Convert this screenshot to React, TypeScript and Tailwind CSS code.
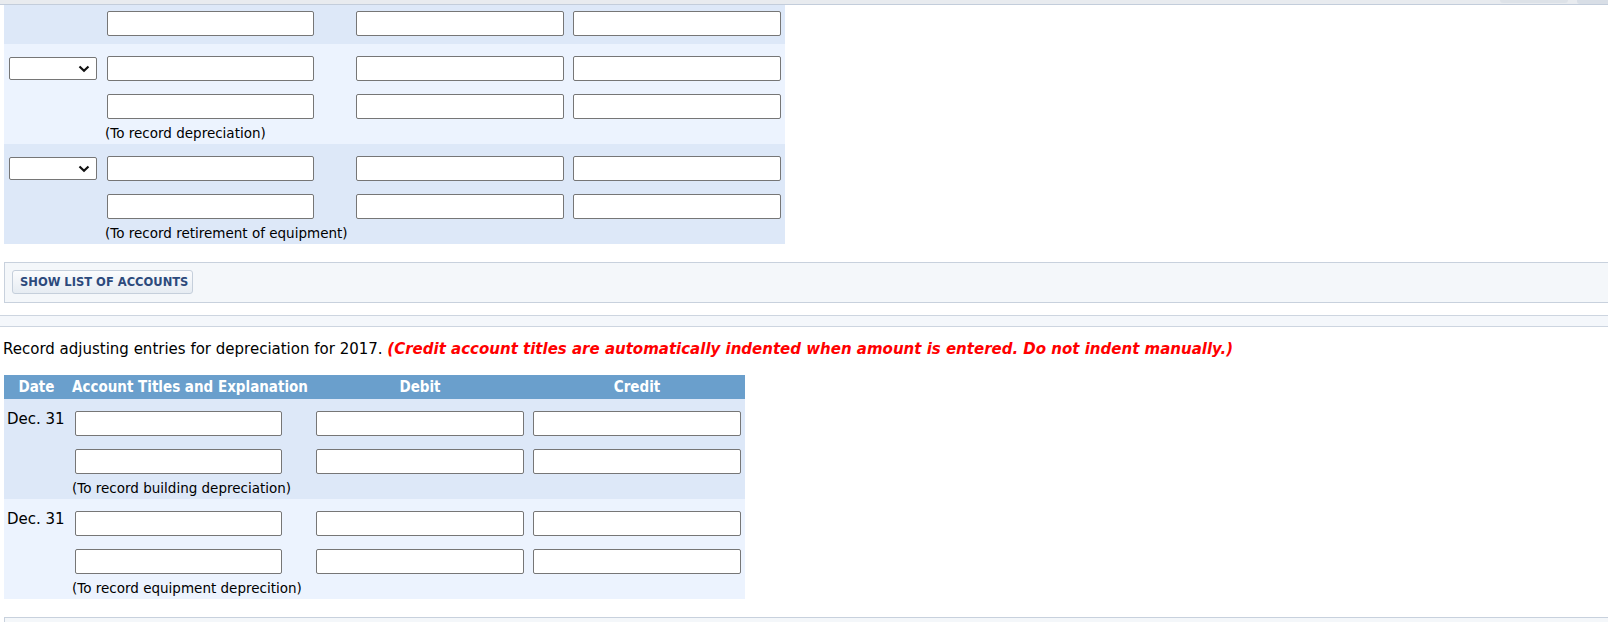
import React from 'react'

type EntryRow = { date?: string; note?: string; select?: boolean }

const FONT = "font-['DejaVu_Sans',Verdana,sans-serif]"
const HEAD_FONT = "font-['DejaVu_Sans_Condensed','DejaVu_Sans',sans-serif]"

// earlier part of the problem (scrolled off the top)
const RETIREMENT_ROWS: EntryRow[] = [
  { select: true, note: '(To record depreciation)' },
  { select: true, note: '(To record retirement of equipment)' },
]

const ADJUSTING_ROWS: EntryRow[] = [
  { date: 'Dec. 31', note: '(To record building depreciation)' },
  { date: 'Dec. 31', note: '(To record equipment deprecition)' },
]

function Field({ className }: { className: string }) {
  return (
    <input
      type="text"
      className={`h-[25px] shrink-0 rounded-[2px] border border-[#767676] bg-white px-1 text-[13px] outline-none ${className}`}
    />
  )
}

function AccountSelect() {
  return (
    <div className="flex h-[23px] w-[88px] shrink-0 items-center justify-end rounded-[2px] border border-[#767676] bg-white pr-[6px]">
      <svg width="12" height="8" viewBox="0 0 12 8">
        <path d="M1.5 1.5l4.5 4.2 4.5-4.2" fill="none" stroke="#111" strokeWidth="2.2" />
      </svg>
    </div>
  )
}

// line of the first table: select | account | debit | credit
function RetireLine({ select }: { select?: boolean }) {
  return (
    <div className="flex items-center pl-[5px]">
      {select ? <AccountSelect /> : <div className="w-[88px] shrink-0" />}
      <Field className="ml-[10px] w-[207px]" />
      <Field className="ml-[42px] w-[208px]" />
      <Field className="ml-[9px] w-[208px]" />
    </div>
  )
}

function AdjustLine({ date }: { date?: string }) {
  return (
    <div className="flex items-start pl-[3px]">
      <div className="-mt-[1px] w-[68px] shrink-0 text-[15px] leading-[18px]">{date}</div>
      <Field className="w-[207px]" />
      <Field className="ml-[34px] w-[208px]" />
      <Field className="ml-[9px] w-[208px]" />
    </div>
  )
}

export default function App() {
  return (
    <div className={`${FONT} h-[622px] w-[1608px] overflow-hidden bg-white text-black`}>
      {/* top toolbar edge */}
      <div className="flex h-[5px] border-b border-[#c3cddb] bg-[#e8ebef]">
        <div className="ml-auto h-[3px] w-[68px] rounded-b-[3px] bg-[#dde2e8]" />
        <div className="ml-[9px] h-[4px] w-[31px] rounded-bl-[3px] bg-[#d8dee6]" />
      </div>

      {/* retirement entries table (continued) */}
      <div className="ml-[4px] w-[781px]">
        <div className="bg-[#dde8f8] pb-[8px] pt-[6px]">
          <RetireLine />
        </div>
        {RETIREMENT_ROWS.map((row, i) => (
          <div key={i} className={`pt-[12px] ${i % 2 === 0 ? 'bg-[#ecf3fe]' : 'bg-[#dde8f8]'}`}>
            <RetireLine select={row.select} />
            <div className="mt-[13px]">
              <RetireLine />
            </div>
            <div className="mt-[5px] h-[20px] pl-[101px] text-[13.5px] leading-[18px]">{row.note}</div>
          </div>
        ))}
      </div>

      {/* accounts button panel */}
      <div className="ml-[4px] mt-[18px] h-[41px] border border-r-0 border-[#c8d1dd] bg-[#f4f7fa] pl-[7px] pt-[7px]">
        <button className="flex h-[24px] w-[181px] items-center rounded-[3px] border border-[#c5cfdb] bg-gradient-to-b from-[#fbfcfd] to-[#e6ecf2] pl-[7px] pt-[1px] text-[11.5px] font-bold text-[#2c4a7c]">
          SHOW LIST OF ACCOUNTS
        </button>
      </div>

      <div className="mt-[12px] h-[12px] border-y border-[#cdd5e0] bg-[#f4f7fb]" />

      <p className="mt-[13px] pl-[3px] text-[15px] leading-[18px]">
        Record adjusting entries for depreciation for 2017.{' '}
        <span className="font-bold italic text-[#ff0000]">
          (Credit account titles are automatically indented when amount is entered. Do not indent manually.)
        </span>
      </p>

      {/* adjusting entries table */}
      <div className="ml-[4px] mt-[17px] w-[741px]">
        <div className={`${HEAD_FONT} flex h-[24px] items-center bg-[#6a9fcc] text-[15px] font-bold text-white`}>
          <div className="w-[65px] text-center">Date</div>
          <div className="w-[247px] pl-[3px]">Account Titles and Explanation</div>
          <div className="w-[208px] text-center">Debit</div>
          <div className="ml-[9px] w-[208px] text-center">Credit</div>
        </div>
        {ADJUSTING_ROWS.map((row, i) => (
          <div key={i} className={`pt-[12px] ${i % 2 === 0 ? 'bg-[#dde8f8]' : 'bg-[#ecf3fe]'}`}>
            <AdjustLine date={row.date} />
            <div className="mt-[13px]">
              <AdjustLine />
            </div>
            <div className="mt-[5px] h-[20px] pl-[68px] text-[13.5px] leading-[18px]">{row.note}</div>
          </div>
        ))}
      </div>

      <div className="ml-[4px] mt-[18px] h-[41px] border border-r-0 border-[#c8d1dd] bg-[#f4f7fa]" />
    </div>
  )
}
